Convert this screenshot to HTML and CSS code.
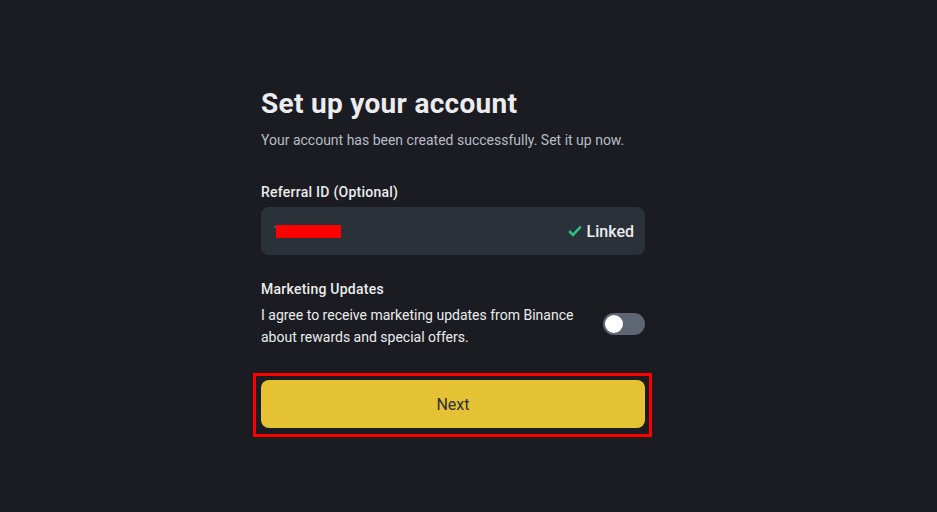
FILE: index.html
```html
<!DOCTYPE html>
<html>
<head>
<meta charset="utf-8">
<link rel="stylesheet" href="styles.css">
</head>
<body>
<div class="page">
  <div class="card">
    <h1 class="title">Set up your account</h1>
    <p class="subtitle">Your account has been created successfully. Set it up now.</p>
    <div class="label label-ref">Referral ID (Optional)</div>
    <div class="field">
      <span class="value"><span class="ghost">1</span><span class="redact"></span></span>
      <span class="linked">
        <svg class="check" width="14" height="12" viewBox="0 0 14 12"><path d="M1.2 6 L5 9.8 L12.8 1.6" fill="none" stroke="#2ebd85" stroke-width="2.6"/></svg>
        Linked
      </span>
    </div>
    <div class="label label-mkt">Marketing Updates</div>
    <div class="agree">
      <p class="agree-text">I agree to receive marketing updates from Binance about rewards and special offers.</p>
      <span class="toggle"><span class="knob"></span></span>
    </div>
    <div class="btn-wrap">
      <button class="btn">Next</button>
    </div>
  </div>
</div>
</body>
</html>
```
FILE: styles.css
```css
html, body {
  margin: 0;
  padding: 0;
  background: #1b1c21;
  height: 100%;
}
body {
  font-family: Roboto, "Liberation Sans", sans-serif;
  color: #eaecef;
}
.page {
  padding: 86px 0 0 261px;
}
.card {
  width: 384px;
  display: flex;
  flex-direction: column;
}
.title {
  margin: 0;
  font-size: 28px;
  line-height: 36px;
  font-weight: 700;
  letter-spacing: 0.3px;
  color: #eaecef;
}
.subtitle {
  margin: 7px 0 0;
  font-size: 14px;
  line-height: 22px;
  color: #b7bdc6;
}
.label {
  font-size: 14px;
  line-height: 22px;
  font-weight: 500;
  letter-spacing: 0.25px;
  color: #eaecef;
}
.label-ref { margin-top: 30px; }
.field {
  margin-top: 4px;
  height: 48px;
  border-radius: 8px;
  background: #2b3139;
  display: flex;
  align-items: center;
  justify-content: space-between;
  padding: 0 11px 0 12px;
  box-sizing: border-box;
}
.value {
  display: flex;
  align-items: center;
  position: relative;
}
.ghost {
  font-size: 14px;
  color: #5e6673;
  width: 8px;
  overflow: hidden;
}
.redact {
  position: absolute;
  left: 3px;
  top: 50%;
  margin-top: -6px;
  display: block;
  width: 65px;
  height: 13px;
  background: #ff0000;
}
.linked {
  display: flex;
  align-items: center;
  gap: 5px;
  font-size: 16px;
  font-weight: 500;
  color: #eaecef;
}
.label-mkt { margin-top: 23px; }
.agree {
  margin-top: 4px;
  display: flex;
  align-items: flex-start;
  justify-content: space-between;
}
.agree-text {
  margin: 0;
  width: 330px;
  font-size: 14px;
  line-height: 22px;
  color: #eaecef;
}
.toggle {
  margin-top: 9px;
  width: 42px;
  height: 22px;
  border-radius: 11px;
  background: #5e6673;
  display: flex;
  align-items: center;
  padding: 0 2px;
  box-sizing: border-box;
}
.knob {
  width: 18px;
  height: 18px;
  border-radius: 50%;
  background: #ffffff;
}
.btn-wrap {
  margin: 25px -7px 0 -8px;
  padding: 4px 4px 6px 5px;
  border: 3px solid #ff0000;
}
.btn {
  display: block;
  width: 384px;
  height: 48px;
  border: none;
  border-radius: 8px;
  background: #e4c234;
  color: #2b2f36;
  font-family: Roboto, "Liberation Sans", sans-serif;
  font-size: 16px;
  font-weight: 400;
}
```
